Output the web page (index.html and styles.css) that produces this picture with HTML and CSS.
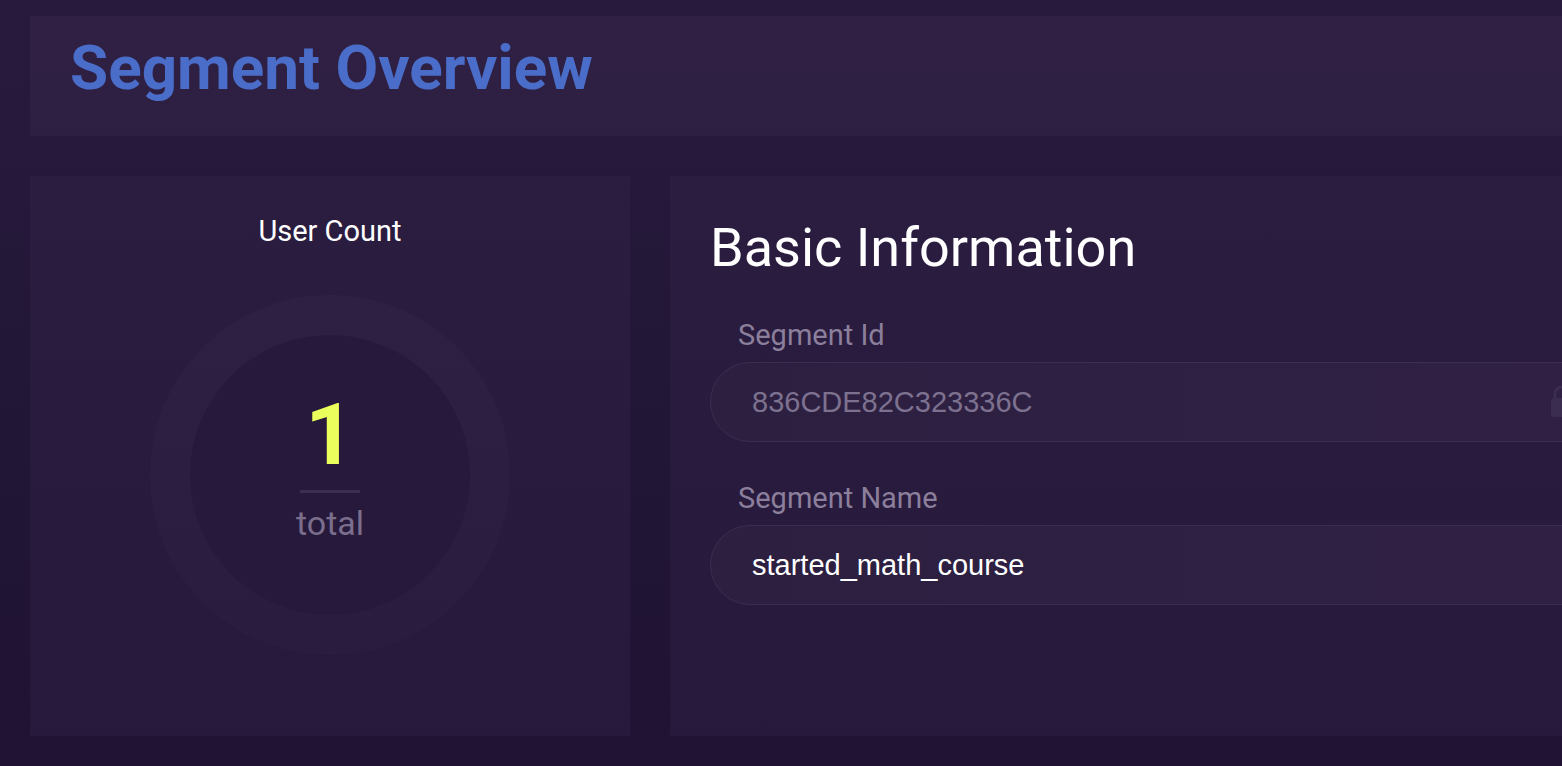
FILE: index.html
```html
<!DOCTYPE html>
<html lang="en">
<head>
<meta charset="utf-8">
<title>Segment Overview</title>
<link rel="stylesheet" href="styles.css">
</head>
<body>
<div class="page">
  <header class="page-header">
    <h1 class="page-title">Segment Overview</h1>
  </header>
  <div class="content">
    <section class="card count-card">
      <h2 class="count-title">User Count</h2>
      <div class="ring-outer">
        <div class="ring-inner">
          <div class="count-value">1</div>
          <div class="count-divider"></div>
          <div class="count-label">total</div>
        </div>
      </div>
    </section>
    <section class="card info-card">
      <h2 class="info-title">Basic Information</h2>
      <div class="field">
        <label class="field-label">Segment Id</label>
        <div class="field-input is-readonly">
          <span class="field-value">836CDE82C323336C</span>
          <svg class="lock-icon" viewBox="0 0 24 32" width="24" height="32" aria-hidden="true">
            <path d="M5 12V8a7 7 0 0 1 14 0v4" fill="none" stroke="#3a2d4f" stroke-width="3"/>
            <rect x="1" y="12" width="22" height="19" rx="3" fill="#3a2d4f"/>
          </svg>
        </div>
      </div>
      <div class="field">
        <label class="field-label">Segment Name</label>
        <div class="field-input">
          <span class="field-value is-white">started_math_course</span>
        </div>
      </div>
    </section>
  </div>
</div>
</body>
</html>
```
FILE: styles.css
```css
html, body {
  margin: 0;
  padding: 0;
}
body {
  width: 1562px;
  height: 766px;
  overflow: hidden;
  background: linear-gradient(180deg, #271a3d 0%, #221636 60%, #1f1232 100%);
  font-family: Roboto, "Noto Sans", sans-serif;
}
.page {
  width: 1645px;
  box-sizing: border-box;
  padding: 16px 0 0 30px;
}
.page-header {
  height: 120px;
  box-sizing: border-box;
  padding-left: 40px;
  display: flex;
  align-items: center;
  background: linear-gradient(180deg, #302144 0%, #2d1f41 100%);
}
.page-title {
  margin: 0;
  font-size: 62px;
  font-weight: 700;
  line-height: 64px;
  color: #4a6dc9;
  letter-spacing: 0;
  transform: translateY(-8px);
}
.content {
  display: grid;
  grid-template-columns: 600px 1fr;
  gap: 40px;
  margin-top: 40px;
}
.card {
  height: 560px;
  box-sizing: border-box;
  background: linear-gradient(180deg, #2b1d40 0%, #27193b 100%);
}
.count-card {
  display: flex;
  flex-direction: column;
  align-items: center;
  padding-top: 37px;
}
.count-title {
  margin: 0;
  font-size: 29px;
  font-weight: 400;
  line-height: 36px;
  color: #ffffff;
}
.ring-outer {
  margin-top: 46px;
  width: 360px;
  height: 360px;
  border-radius: 50%;
  display: flex;
  align-items: center;
  justify-content: center;
  background: linear-gradient(180deg, #2e2043 0%, #2a1c3e 100%);
}
.ring-inner {
  width: 280px;
  height: 280px;
  border-radius: 50%;
  background: #27193b;
  display: flex;
  flex-direction: column;
  align-items: center;
  justify-content: center;
}
.count-value {
  font-size: 86px;
  font-weight: 700;
  line-height: 86px;
  color: #eaff5b;
  margin-top: -16px;
}
.count-divider {
  width: 60px;
  height: 3px;
  background: #3a2f51;
  margin-top: 12px;
}
.count-label {
  font-size: 34px;
  line-height: 40px;
  color: #7a6e8c;
  margin-top: 10px;
}
.info-card {
  padding: 40px 40px 0 40px;
}
.info-title {
  margin: 0 0 38px 0;
  font-size: 54px;
  font-weight: 400;
  line-height: 64px;
  color: #ffffff;
}
.field {
  display: flex;
  flex-direction: column;
  margin-bottom: 39px;
}
.field-label {
  margin-left: 28px;
  margin-bottom: 10px;
  font-size: 29px;
  line-height: 34px;
  color: #8b7f9b;
}
.field-input {
  height: 80px;
  box-sizing: border-box;
  border: 1px solid #3a2d4f;
  border-radius: 40px;
  background: linear-gradient(90deg, #2c1f40 0%, #302144 100%);
  padding: 0 30px 0 41px;
  display: flex;
  align-items: center;
  justify-content: space-between;
}
.field-value {
  font-family: "Liberation Sans", Arial, sans-serif;
  font-size: 29px;
  color: #7d7190;
}
.field-value.is-white {
  color: #ffffff;
}
.lock-icon {
  display: block;
}
```
